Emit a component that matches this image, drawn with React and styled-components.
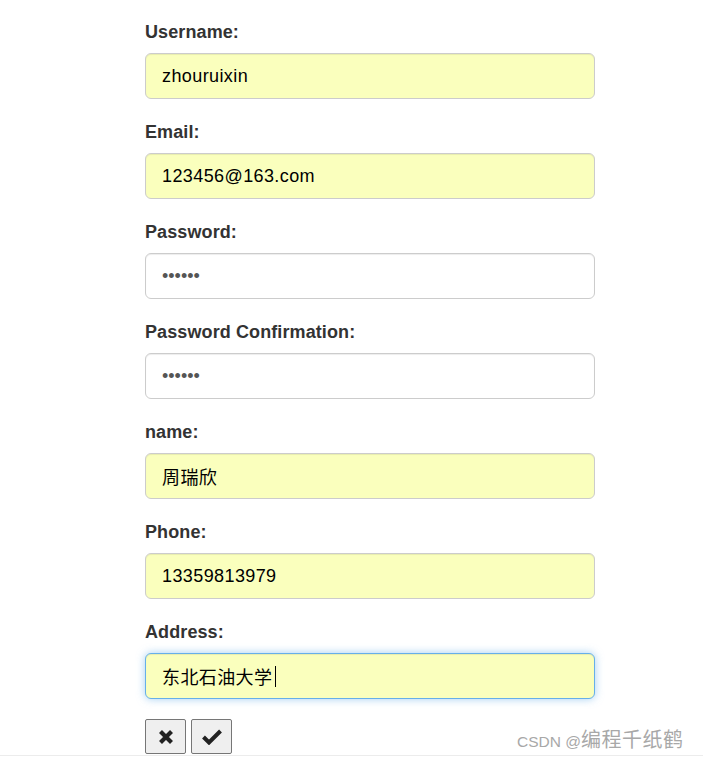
import React from "react";
import styled, { createGlobalStyle } from "styled-components";

const Global = createGlobalStyle`
  html, body { margin: 0; padding: 0; background: #fff; }
  body { font-family: "Liberation Sans", Arial, "Noto Sans CJK SC", sans-serif; }
`;

const Page = styled.div`
  position: relative;
  box-sizing: border-box;
  height: 756px;
  padding: 19px 0 0 145px;
  border-bottom: 1px solid #ececec;
`;

const Form = styled.form`
  width: 450px;
  display: flex;
  flex-direction: column;
`;

const Group = styled.div`
  display: flex;
  flex-direction: column;
  margin-bottom: 20px;
`;

const Label = styled.label`
  display: block;
  font-size: 18px;
  line-height: 26px;
  font-weight: bold;
  color: #333;
  letter-spacing: 0.1px;
  margin-bottom: 8px;
`;

const FieldWrap = styled.div`
  position: relative;
`;

const Input = styled.input`
  display: block;
  box-sizing: border-box;
  width: 100%;
  height: 46px;
  margin: 0;
  padding: 10px 16px;
  font-family: "Liberation Sans", Arial, "Noto Sans CJK SC", sans-serif;
  font-size: 18px;
  letter-spacing: ${(p) => (p.$secret ? "0" : "0.4px")};
  color: ${(p) => (p.$filled ? "#000" : "#555")};
  background: ${(p) => (p.$filled ? "#faffbd" : "#fff")};
  border: 1px solid ${(p) => (p.$focused ? "#66afe9" : "#ccc")};
  border-radius: 6px;
  box-shadow: ${(p) =>
    p.$focused
      ? "inset 0 1px 1px rgba(0,0,0,.075), 0 0 8px rgba(102,175,233,.6)"
      : "inset 0 1px 1px rgba(0,0,0,.075)"};
  outline: none;
`;

const Caret = styled.span`
  position: absolute;
  top: 13px;
  width: 1px;
  height: 21px;
  background: #000;
`;

const Buttons = styled.div`
  display: flex;
  gap: 5px;
`;

const IconButton = styled.button`
  box-sizing: border-box;
  width: 41px;
  height: 35px;
  padding: 0;
  display: flex;
  align-items: center;
  justify-content: center;
  background: #efefef;
  border: 1px solid #767676;
  border-radius: 2px;
`;

const Watermark = styled.div`
  position: absolute;
  left: 517px;
  top: 727px;
  display: flex;
  align-items: baseline;
  line-height: 24px;
  color: #a8a8a8;
  white-space: pre;
`;

const MarkLatin = styled.span`
  font-family: "Liberation Sans", Arial, sans-serif;
  font-size: 15.5px;
`;

const MarkCjk = styled.span`
  font-family: "Noto Sans CJK SC", sans-serif;
  font-size: 20px;
  letter-spacing: 0.5px;
`;

const fields = [
  { label: "Username:", value: "zhouruixin", filled: true },
  { label: "Email:", value: "123456@163.com", filled: true },
  { label: "Password:", value: "123456", type: "password" },
  { label: "Password Confirmation:", value: "123456", type: "password" },
  { label: "name:", value: "周瑞欣", filled: true },
  { label: "Phone:", value: "13359813979", filled: true },
  { label: "Address:", value: "东北石油大学", filled: true, focused: true },
];

const XIcon = () => (
  <svg width="16" height="16" viewBox="0 0 16 16">
    <path d="M2.5 2.5 L13.5 13.5 M13.5 2.5 L2.5 13.5" stroke="#222" strokeWidth="4.2" strokeLinecap="butt" fill="none" />
  </svg>
);

const CheckIcon = () => (
  <svg width="20" height="16" viewBox="0 0 20 16">
    <path d="M1.5 8 L7 13.5 L18.5 2" stroke="#222" strokeWidth="4" fill="none" />
  </svg>
);

export default function App() {
  return (
    <>
      <Global />
      <Page>
        <Form onSubmit={(e) => e.preventDefault()}>
          {fields.map((f) => (
            <Group key={f.label}>
              <Label>{f.label}</Label>
              <FieldWrap>
                <Input
                  type={f.type || "text"}
                  defaultValue={f.value}
                  readOnly
                  $secret={f.type === "password"}
                  $filled={f.filled}
                  $focused={f.focused}
                />
                {f.focused && <Caret style={{ left: "130px" }} />}
              </FieldWrap>
            </Group>
          ))}
          <Buttons>
            <IconButton type="button" aria-label="cancel">
              <XIcon />
            </IconButton>
            <IconButton type="submit" aria-label="submit">
              <CheckIcon />
            </IconButton>
          </Buttons>
        </Form>
        <Watermark>
          <MarkLatin>CSDN @</MarkLatin>
          <MarkCjk>编程千纸鹤</MarkCjk>
        </Watermark>
      </Page>
    </>
  );
}
